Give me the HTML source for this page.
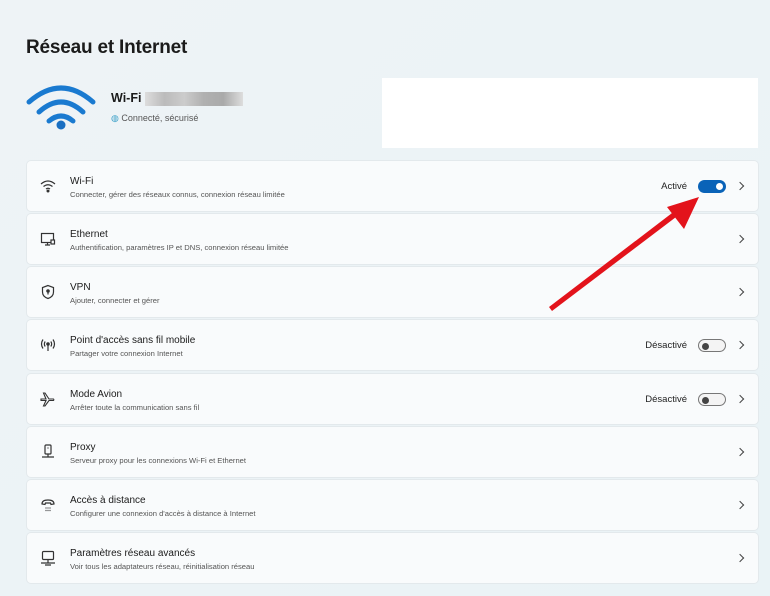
<!DOCTYPE html>
<html><head><meta charset="utf-8"><style>
body{margin:0;width:770px;height:596px;background:linear-gradient(135deg,#eef3f6,#eaf3f6);font-family:"Liberation Sans",sans-serif;position:relative;overflow:hidden;color:#1b1b1b}
h1{position:absolute;left:26px;top:37px;margin:0;font-size:19px;font-weight:600;letter-spacing:-0.2px}
.card{position:absolute;left:27px;width:731px;height:50px;background:#f9fbfc;border-radius:4px;box-shadow:0 0 0 1px #e3e9ec}
.card .ic{position:absolute;left:13px;top:17px;width:16px;height:16px}
.t{position:absolute;left:43px;top:15px;font-size:10px;color:#1b1b1b}
.s{position:absolute;left:43px;top:29px;font-size:7.6px;color:#555}
.chev{position:absolute;right:15px;top:22px;width:5px;height:5px;border-right:1.2px solid #444;border-top:1.2px solid #444;transform:rotate(45deg)}
.st{position:absolute;right:71px;top:20px;font-size:9.5px;color:#222}
.tg{position:absolute;right:32px;top:19px;width:28px;height:13px;border-radius:8px;box-sizing:border-box}
.on{background:#0a63b8}
.on:after{content:"";position:absolute;right:3px;top:3px;width:7px;height:7px;border-radius:50%;background:#fff}
.off{border:1px solid #777;background:#f4f4f4}
.off:after{content:"";position:absolute;left:3px;top:2.5px;width:7px;height:7px;border-radius:50%;background:#444}
</style></head><body>
<h1>Réseau et Internet</h1>
<svg style="position:absolute;left:25px;top:80px" width="72" height="50" viewBox="0 0 72 50">
<g fill="none" stroke="#1a7ad0" stroke-width="5" stroke-linecap="round">
<path d="M4 22 Q36 -6 68 22"/><path d="M14 32 Q36 12 58 32"/><path d="M24 41 Q36 31 48 41"/></g>
<circle cx="36" cy="45" r="4.5" fill="#1a6fc2"/></svg>
<div style="position:absolute;left:111px;top:91px;font-size:12.5px;font-weight:600">Wi-Fi</div>
<div style="position:absolute;left:145px;top:92px;width:98px;height:14px;background:linear-gradient(90deg,#ddd,#bbb,#ccc,#b0b0b0,#aaa,#ddd)"></div>
<div style="position:absolute;left:111px;top:113px;font-size:9px;color:#555"><span style="color:#3aa0c8">◍</span> Connecté, sécurisé</div>
<div style="position:absolute;left:382px;top:78px;width:376px;height:70px;background:#fff"></div>

<div class="card" style="top:161px"><svg class="ic" viewBox="0 0 16 16" fill="none" stroke="#333" stroke-width="1.2"><path d="M1 6Q8 0 15 6M3.5 8.5Q8 5 12.5 8.5M6 11Q8 9.5 10 11"/><circle cx="8" cy="13" r=".9" fill="#333"/></svg><div class="t">Wi-Fi</div><div class="s">Connecter, gérer des réseaux connus, connexion réseau limitée</div><div class="st">Activé</div><div class="tg on"></div><div class="chev"></div></div>
<div class="card" style="top:214px"><svg class="ic" viewBox="0 0 16 16" fill="none" stroke="#333" stroke-width="1.2"><rect x="1.5" y="2.5" width="12" height="9"/><path d="M5 14h5M7.5 11.5v2.5"/><rect x="11" y="9" width="3.5" height="4" fill="#f9fbfc"/></svg><div class="t">Ethernet</div><div class="s">Authentification, paramètres IP et DNS, connexion réseau limitée</div><div class="chev"></div></div>
<div class="card" style="top:267px"><svg class="ic" viewBox="0 0 16 16" fill="none" stroke="#333" stroke-width="1.2"><path d="M8 1.5L2.5 3.5v4.5c0 3.5 2.5 5.5 5.5 6.5 3-1 5.5-3 5.5-6.5V3.5z"/><circle cx="8" cy="7" r="1.2" fill="#333"/><path d="M8 8v2.5"/></svg><div class="t">VPN</div><div class="s">Ajouter, connecter et gérer</div><div class="chev"></div></div>
<div class="card" style="top:320px"><svg class="ic" viewBox="0 0 16 16" fill="none" stroke="#333" stroke-width="1.2"><path d="M3 2.5Q0 7 3 11.5M13 2.5Q16 7 13 11.5M5.2 4.5Q3.5 7 5.2 9.5M10.8 4.5Q12.5 7 10.8 9.5M8 8v6"/><circle cx="8" cy="7" r="1.2" fill="#333"/></svg><div class="t">Point d'accès sans fil mobile</div><div class="s">Partager votre connexion Internet</div><div class="st">Désactivé</div><div class="tg off"></div><div class="chev"></div></div>
<div class="card" style="top:374px"><svg class="ic" viewBox="0 0 16 16" fill="none" stroke="#333" stroke-width="1.1"><path d="M1 8h5l-2.5-6h1.5l4 6h4.5a1 1 0 010 1.5H9l-4 5.5H3.5L6 9.5H1z"/></svg><div class="t">Mode Avion</div><div class="s">Arrêter toute la communication sans fil</div><div class="st">Désactivé</div><div class="tg off"></div><div class="chev"></div></div>
<div class="card" style="top:427px"><svg class="ic" viewBox="0 0 16 16" fill="none" stroke="#333" stroke-width="1.2"><rect x="5" y="1" width="6" height="9" rx="1"/><path d="M8 10v3M2 13h12M7.5 4h1"/></svg><div class="t">Proxy</div><div class="s">Serveur proxy pour les connexions Wi-Fi et Ethernet</div><div class="chev"></div></div>
<div class="card" style="top:480px"><svg class="ic" viewBox="0 0 16 16" fill="none" stroke="#333" stroke-width="1.2"><path d="M2 7Q2 3 8 3t6 4l-3 .5-.5-1.5h-5L5 7.5z"/><path d="M5.5 11h1M7.5 11h1M9.5 11h1M5.5 13.5h1M7.5 13.5h1M9.5 13.5h1"/></svg><div class="t">Accès à distance</div><div class="s">Configurer une connexion d'accès à distance à Internet</div><div class="chev"></div></div>
<div class="card" style="top:533px"><svg class="ic" viewBox="0 0 16 16" fill="none" stroke="#333" stroke-width="1.2"><rect x="2.5" y="1.5" width="11" height="8" rx="1"/><path d="M8 9.5v3M1 13h14M5 15h6"/></svg><div class="t">Paramètres réseau avancés</div><div class="s">Voir tous les adaptateurs réseau, réinitialisation réseau</div><div class="chev"></div></div>

<svg style="position:absolute;left:0;top:0" width="770" height="596"><g fill="#e3131b"><path d="M549 307L552 311L680 214L676 210Z"/><path d="M699 197L667 207L684 229Z"/></g></svg>
</body></html>
